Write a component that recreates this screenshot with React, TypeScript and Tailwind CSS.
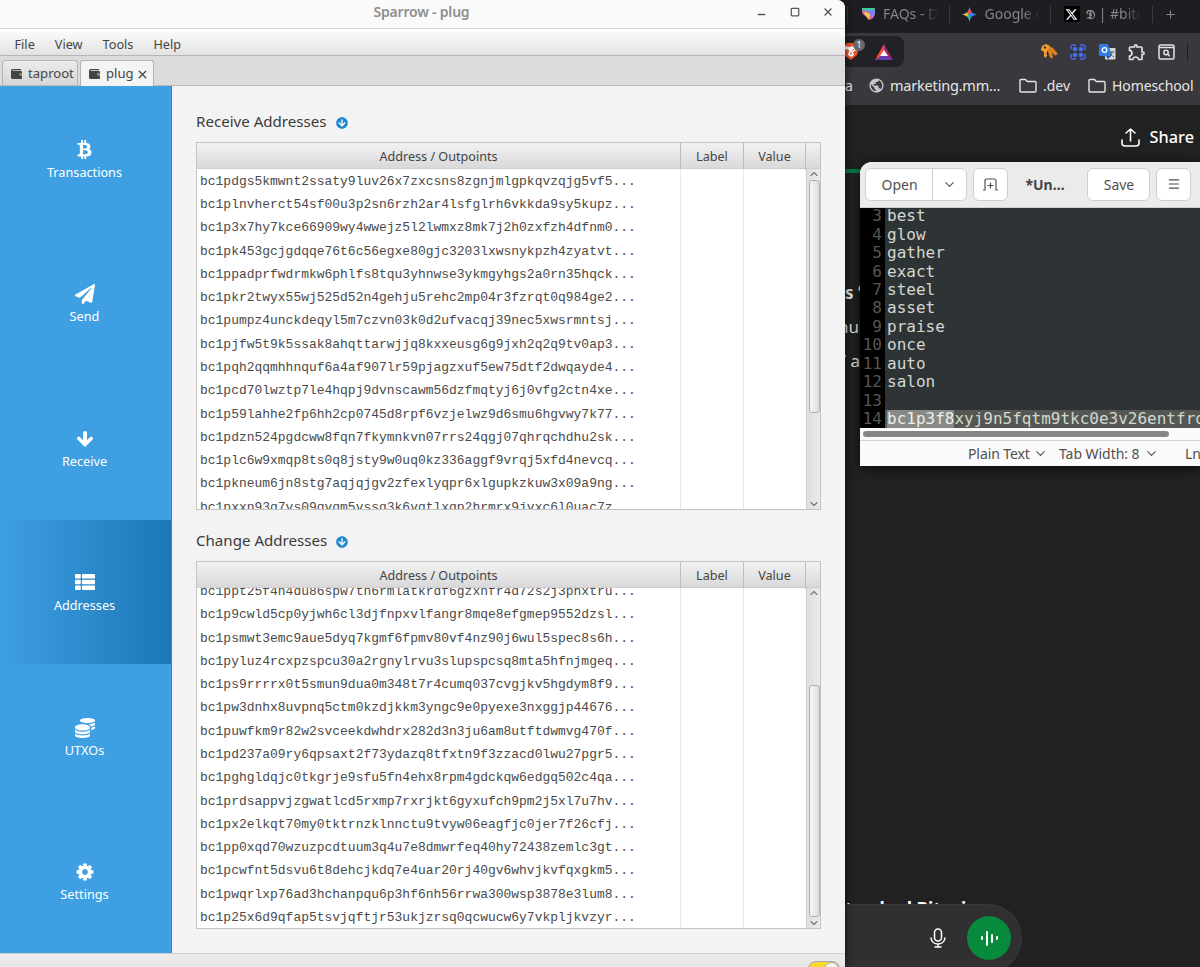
import { Fragment } from 'react';
import type { ReactNode } from 'react';
import { ChevronDown, ChevronUp, Menu, Minus, Plus, Square, X } from 'lucide-react';
import { FaArrowCircleDown, FaBtc, FaCoins, FaPaperPlane } from 'react-icons/fa';
import { FaXTwitter } from 'react-icons/fa6';
import { MdOutlineExtension, MdPublic } from 'react-icons/md';

const receiveAddresses = [
  'bc1pdgs5kmwnt2ssaty9luv26x7zxcsns8zgnjmlgpkqvzqjg5vf5...',
  'bc1plnvherct54sf00u3p2sn6rzh2ar4lsfglrh6vkkda9sy5kupz...',
  'bc1p3x7hy7kce66909wy4wwejz5l2lwmxz8mk7j2h0zxfzh4dfnm0...',
  'bc1pk453gcjgdqqe76t6c56egxe80gjc3203lxwsnykpzh4zyatvt...',
  'bc1ppadprfwdrmkw6phlfs8tqu3yhnwse3ykmgyhgs2a0rn35hqck...',
  'bc1pkr2twyx55wj525d52n4gehju5rehc2mp04r3fzrqt0q984ge2...',
  'bc1pumpz4unckdeqyl5m7czvn03k0d2ufvacqj39nec5xwsrmntsj...',
  'bc1pjfw5t9k5ssak8ahqttarwjjq8kxxeusg6g9jxh2q2q9tv0ap3...',
  'bc1pqh2qqmhhnquf6a4af907lr59pjagzxuf5ew75dtf2dwqayde4...',
  'bc1pcd70lwztp7le4hqpj9dvnscawm56dzfmqtyj6j0vfg2ctn4xe...',
  'bc1p59lahhe2fp6hh2cp0745d8rpf6vzjelwz9d6smu6hgvwy7k77...',
  'bc1pdzn524pgdcww8fqn7fkymnkvn07rrs24qgj07qhrqchdhu2sk...',
  'bc1plc6w9xmqp8ts0q8jsty9w0uq0kz336aggf9vrqj5xfd4nevcq...',
  'bc1pkneum6jn8stg7aqjqjgv2zfexlyqpr6xlgupkzkuw3x09a9ng...',
  'bc1pxxn93q7vs09qvqm5vssq3k6vqtlxqp2hrmrx9jvxc6l0uac7z...',
];

const changeAddresses = [
  'bc1ppt25f4n4du86spw7tn6rmlatkrdf6gzxnfr4d72s2j3phxtru...',
  'bc1p9cwld5cp0yjwh6cl3djfnpxvlfangr8mqe8efgmep9552dzsl...',
  'bc1psmwt3emc9aue5dyq7kgmf6fpmv80vf4nz90j6wul5spec8s6h...',
  'bc1pyluz4rcxpzspcu30a2rgnylrvu3slupspcsq8mta5hfnjmgeq...',
  'bc1ps9rrrrx0t5smun9dua0m348t7r4cumq037cvgjkv5hgdym8f9...',
  'bc1pw3dnhx8uvpnq5ctm0kzdjkkm3yngc9e0pyexe3nxggjp44676...',
  'bc1puwfkm9r82w2svceekdwhdrx282d3n3ju6am8utftdwmvg470f...',
  'bc1pd237a09ry6qpsaxt2f73ydazq8tfxtn9f3zzacd0lwu27pgr5...',
  'bc1pghgldqjc0tkgrje9sfu5fn4ehx8rpm4gdckqw6edgq502c4qa...',
  'bc1prdsappvjzgwatlcd5rxmp7rxrjkt6gyxufch9pm2j5xl7u7hv...',
  'bc1px2elkqt70my0tktrnzklnnctu9tvyw06eagfjc0jer7f26cfj...',
  'bc1pp0xqd70wzuzpcdtuum3q4u7e8dmwrfeq40hy72438zemlc3gt...',
  'bc1pcwfnt5dsvu6t8dehcjkdq7e4uar20rj40gv6whvjkvfqxgkm5...',
  'bc1pwqrlxp76ad3hchanpqu6p3hf6nh56rrwa300wsp3878e3lum8...',
  'bc1p25x6d9qfap5tsvjqftjr53ukjzrsq0qcwucw6y7vkpljkvzyr...',
];

function DownArrowIcon() {
  return (
    <svg width="18" height="18" viewBox="0 0 18 18" fill="none" stroke="currentColor" strokeWidth="4" strokeLinecap="round">
      <path d="M9 3v10" />
      <path d="M2.800 8.500L9 14.500l6.200-6" strokeWidth="3.600" />
    </svg>
  );
}

function ListIcon() {
  return (
    <svg width="20" height="16" viewBox="0 0 20 16" fill="currentColor" className="-mt-0.5">
      {[0, 5.7, 11.4].map((y) => (
        <Fragment key={y}>
          <rect x="0" y={y} width="5.800" height="4.600" rx="0.800" />
          <rect x="7" y={y} width="13" height="4.600" rx="0.800" />
        </Fragment>
      ))}
    </svg>
  );
}

function GearIcon() {
  return (
    <svg width="18" height="18" viewBox="-9 -9 18 18" fill="none" stroke="currentColor">
      <circle r="4.700" strokeWidth="3.600" />
      {[0, 45, 90, 135].map((angle) => (
        <path key={angle} d="M0-8.500v3M0 8.500v-3" strokeWidth="3.600" transform={`rotate(${angle})`} />
      ))}
    </svg>
  );
}

function WalletIcon() {
  return (
    <svg width="11" height="10" viewBox="0 0 11 10" className="mr-[6px] shrink-0" fill="currentColor">
      <path d="M0 1.500Q0 0 1.500 0H10v1.200H1.500v.8H10q1 0 1 1v1H8.500v2.500H11V9q0 1-1 1H1.500Q0 10 0 8.500z" />
      <path d="M8.500 4H11v2.500H8.500z" opacity="0.6" />
    </svg>
  );
}

function FolderIcon() {
  return (
    <svg width="18" height="15" viewBox="0 0 18 15" fill="none" stroke="currentColor" strokeWidth="1.400" className="shrink-0">
      <path d="M1 2.500q0-1 1-1h4.500l1.800 2H16q1 0 1 1V13q0 1-1 1H2q-1 0-1-1z" strokeLinejoin="round" />
    </svg>
  );
}

const navItems = [
  { label: 'Transactions', icon: <FaBtc size={19} /> },
  { label: 'Send', icon: <FaPaperPlane size={20} /> },
  { label: 'Receive', icon: <DownArrowIcon /> },
  { label: 'Addresses', icon: <ListIcon />, active: true },
  { label: 'UTXOs', icon: <FaCoins size={20} /> },
  { label: 'Settings', icon: <GearIcon /> },
];

const words = ['best', 'glow', 'gather', 'exact', 'steel', 'asset', 'praise', 'once', 'auto', 'salon', ''];

interface AddressTableProps {
  title: string;
  rows: string[];
  scrolled?: boolean;
}

function AddressTable({ title, rows, scrolled }: AddressTableProps) {
  return (
    <section>
      <div className="flex h-5 items-center gap-[9px]">
        <h2 className="-mt-0.5 text-[15.1px] text-[#3b3b3b]">{title}</h2>
        <FaArrowCircleDown size={12} className="mt-px text-[#1e88cf]" />
      </div>
      <div className="mt-[10px] flex h-[368px] w-[625px] flex-col overflow-hidden border border-[#c3c3c3] bg-white">
        <div className="grid h-[26px] shrink-0 grid-cols-[484px_63px_62px_1fr] border-b border-[#cfcfcf] bg-gradient-to-b from-[#f2f2f2] to-[#d9d9d9] text-center text-[12.6px] leading-[27px] text-[#444]">
          <div className="border-r border-[#bdbdbd]">Address / Outpoints</div>
          <div className="border-r border-[#bdbdbd]">Label</div>
          <div className="border-r border-[#bdbdbd]">Value</div>
          <div />
        </div>
        <div className="grid min-h-0 flex-1 grid-cols-[484px_63px_62px_1fr]">
          <div className="overflow-hidden border-r border-[#e9e9e9] pl-[3px] font-['Liberation_Mono',monospace] text-[12.98px] text-[#4a4a4a]">
            <div className={scrolled ? '-mt-[7.9px]' : 'mt-[0.9px]'}>
              {rows.map((address) => (
                <div key={address} className="h-[23.27px] leading-[23.27px]">
                  {address}
                </div>
              ))}
            </div>
          </div>
          <div className="border-r border-[#e9e9e9]" />
          <div />
          <div className="flex flex-col items-center border-l border-[#cfcfcf] bg-gradient-to-r from-[#dedede] to-[#ececec] text-[#777]">
            <ChevronUp size={14} strokeWidth={2.2} className="-mt-px h-3 shrink-0" />
            <div
              className={`w-[11px] rounded-[3px] border border-[#b0b0b0] bg-gradient-to-r from-[#f7f7f7] to-[#dcdcdc] ${
                scrolled ? 'mt-[86px] h-[232px]' : 'h-[233px]'
              }`}
            />
            <ChevronDown size={14} strokeWidth={2.2} className="-mb-px mt-auto h-3 shrink-0" />
          </div>
        </div>
      </div>
    </section>
  );
}

function WalletWindow() {
  return (
    <div className="z-10 flex h-[967px] flex-col overflow-hidden rounded-tr-lg bg-[#f3f3f3] shadow-[0_0_8px_rgba(0,0,0,0.7)]">
      <div className="grid h-[29px] shrink-0 grid-cols-[1fr_auto_1fr] items-center border-b border-[#d6d6d6] bg-[#fafafa]">
        <div />
        <h1 className="-mt-1.5 pr-[2px] text-[14px] font-semibold tracking-[-0.2px] text-[#8e8e8e]">Sparrow - plug</h1>
        <div className="-mt-[5px] flex items-center justify-end gap-[22.5px] pr-[11px] text-[#555]">
          <Minus size={11} strokeWidth={3} className="mt-1.5" />
          <Square size={10} strokeWidth={3} />
          <X size={12} strokeWidth={2.8} />
        </div>
      </div>

      <div className="flex h-[27px] shrink-0 items-center gap-5 border-b border-[#b5b5b5] bg-gradient-to-b from-[#fdfdfd] to-[#e2e2e2] pt-[5px] pl-[14.500px] text-[12.7px] text-[#444]">
        <span>File</span>
        <span>View</span>
        <span>Tools</span>
        <span>Help</span>
      </div>

      <div className="flex h-[30px] shrink-0 items-end gap-[2px] border-b border-[#b9b9b9] bg-[#dcdcdc] pl-[2px] text-[13.1px] text-[#444]">
        <div className="flex h-[25px] w-[76px] items-center rounded-t-[3px] border border-b-0 border-[#b4b4b4] bg-gradient-to-b from-[#ececec] to-[#d6d6d6] pl-2 pt-0.5">
          <WalletIcon />
          taproot
        </div>
        <div className="-mb-px flex h-[26px] w-[74px] items-center rounded-t-[3px] border border-b-0 border-[#b4b4b4] bg-[#f4f4f4] pl-2 pt-px">
          <WalletIcon />
          plug
          <X size={13} strokeWidth={2.3} className="ml-[2px] shrink-0" />
        </div>
      </div>

      <div className="flex h-[867px] shrink-0">
        <nav className="flex w-[172px] flex-col border-r border-[#3387c2] bg-[#3e9fe3] text-white">
          {navItems.map((item) => (
            <div
              key={item.label}
              className={`flex flex-1 flex-col items-center pr-[2px] pt-[52.500px] ${
                item.active ? 'bg-gradient-to-r from-[#3e9fe3] to-[#1c77b6]' : ''
              }`}
            >
              <div className="flex h-[22px] items-center">{item.icon}</div>
              <span className="mt-[1px] text-[12.7px] leading-5">{item.label}</span>
            </div>
          ))}
        </nav>
        <main className="flex flex-1 flex-col gap-[21px] pl-6 pt-[26px]">
          <AddressTable title="Receive Addresses" rows={receiveAddresses} />
          <AddressTable title="Change Addresses" rows={changeAddresses} scrolled />
        </main>
      </div>

      <div className="flex flex-1 justify-end border-t border-[#cfcfcf] bg-gradient-to-b from-[#ececec] to-[#e2e2e2] pr-[5px] pt-[7px]">
        <div className="flex h-4 w-8 justify-end rounded-full border border-[#a8a8a8] bg-[#fbd82f]">
          <div className="size-[15px] rounded-full border border-[#aaa] bg-[#f4f4f4]" />
        </div>
      </div>
    </div>
  );
}

function ShieldIcon() {
  return (
    <svg width="13" height="14" viewBox="0 0 13 14" className="-ml-0.5">
      <path d="M0 2q0-1 1-1h11q1 0 1 1v5q-1 5-6 6Q5 10 2 8 0 7 0 5z" fill="#e85bb4" />
      <path d="M0 2q0-1 1-1h11q1 0 1 1v2L5 3.500 0 4z" fill="#37c9a1" />
      <path d="M2 5q4 0 6 2l-1 6Q5 10 3 8z" fill="#f2cc45" />
      <path d="M5 4l8-1v4l-4 4Q9 7 5 4z" fill="#7885ef" />
    </svg>
  );
}

function SparkIcon() {
  return (
    <svg width="15" height="15" viewBox="0 0 16 16" className="-ml-0.5">
      <path d="M8 0c1 5 3 7 8 8-5 1-7 3-8 8-1-5-3-7-8-8 5-1 7-3 8-8z" fill="#3186f5" />
      <path d="M8 0c1 4 2 5.500 3 6L6 8 4.500 6.500C6.500 5.500 7.400 3 8 0z" fill="#ef5141" />
      <path d="M0 8c2.500-.5 4-1 5-2l2 2-2 2c-1-1-2.500-1.500-5-2z" fill="#f3c624" />
      <path d="M5 10l3-2 1 3c-.5 1.500-.8 3-1 5-.5-3-1.300-5-3-6z" fill="#33b768" />
    </svg>
  );
}

interface BrowserTabProps {
  icon: ReactNode;
  children: ReactNode;
}

function BrowserTab({ icon, children }: BrowserTabProps) {
  return (
    <div className="flex h-[17px] w-[101.500px] shrink-0 items-center overflow-hidden border-l border-[#3b3a40] pl-[13px]">
      <div className="flex w-4 shrink-0 justify-center">{icon}</div>
      <span className="ml-[6px] w-[55px] overflow-hidden bg-gradient-to-r from-[#88878c] from-70% to-transparent bg-clip-text text-[14px] leading-5 whitespace-nowrap text-transparent">
        {children}
      </span>
    </div>
  );
}

function BrowserWindow() {
  return (
    <div className="flex h-[967px] flex-col overflow-hidden bg-[#212121] text-[#e6e6e6]">
      <div className="flex h-[33px] shrink-0 items-center bg-[#1e1d22] pb-[5px] pl-[2px]">
        <BrowserTab icon={<ShieldIcon />}>FAQs - Doc</BrowserTab>
        <BrowserTab icon={<SparkIcon />}>Google Ge</BrowserTab>
        <BrowserTab
          icon={
            <span className="-ml-px flex size-4 items-center justify-center bg-black text-white">
              <FaXTwitter size={13} />
            </span>
          }
        >
          <b>𝕯</b> | #bitcoin
        </BrowserTab>
        <div className="flex h-[17px] items-center border-l border-[#3b3a40] pl-[11px]">
          <Plus size={13} className="text-[#88878c]" />
        </div>
      </div>

      <div className="flex h-[37px] shrink-0 items-center bg-[#39383d]">
        <div className="flex h-[31px] w-[59px] items-center rounded-r-lg bg-[#222126]">
          <div className="relative h-[17px] w-[14px]">
            <svg width="14" height="17" viewBox="0 0 14 17">
              <path d="M-2 2L3-.2h6L13 2l1 3-2 7-6 5-6-4z" fill="#f0532b" />
              <path d="M0 3l4 1 5-1 2 4-3 2 1 3-3 2-3-2 1-4-4-2z" fill="#fff" />
              <path d="M2 6l2 2M9 6L7 8M6 9v3" stroke="#f0532b" strokeWidth="1" />
            </svg>
            <span className="absolute -top-1 left-2 size-3 rounded-full bg-[#68676d] text-center text-[9px] leading-3 text-white">
              1
            </span>
          </div>
          <svg width="18" height="16" viewBox="0 0 18 16" className="ml-4">
            <path d="M9 0L0 16l9-5z" fill="#ff4b2f" />
            <path d="M9 0l9 16-9-5z" fill="#9e2b68" />
            <path d="M0 16h18l-9-6z" fill="#663ab0" />
            <path d="M9 6l-4 6h8z" fill="#fff" />
          </svg>
        </div>
        <div className="ml-auto flex items-center gap-[12.5px] pr-[12px]">
          <svg width="17" height="16" viewBox="0 0 17 16">
            <path d="M1 2l4-2 4 2-1 4-2 1v2H5v1h1v2l-2 2-1-2V8L0 6z" fill="#f5a02a" />
            <path d="M8 2l4 2 5 6-3 1.500-3-3 1 6-3-1-2-6z" fill="#dd8120" />
            <circle cx="4" cy="3.500" r="1.200" fill="#39383d" />
          </svg>
          <svg width="16" height="16" viewBox="0 0 16 16" fill="#4c80ff" stroke="#4568e3" strokeWidth="1.500">
            <path d="M1 5V3q0-2 2-2h3M10 1h3q2 0 2 2v3M15 10v3q0 2-2 2h-3M6 15H3q-2 0-2-2v-3" fill="none" />
            <rect x="3.500" y="3.500" width="3" height="3" rx="1" />
            <rect x="9.500" y="3.500" width="3" height="3" rx="1" />
            <rect x="3.500" y="9.500" width="3" height="3" rx="1" />
            <rect x="9.500" y="9.500" width="3" height="3" rx="1" />
          </svg>
          <svg width="17" height="16" viewBox="0 0 17 16">
            <rect x="6" y="4" width="10.500" height="11.500" rx="1" fill="#d5d8dc" />
            <path d="M1 0h8l4 12H1q-1 0-1-1V1q0-1 1-1z" fill="#2f7de1" />
            <circle cx="5.500" cy="6" r="2.300" fill="none" stroke="#fff" strokeWidth="1.300" />
            <path d="M10.500 8h5M13 7c0 3-1 5-3 6M11 9c1 2 2 3 4 4" fill="none" stroke="#5f6b79" />
            <path d="M7 12h5l-3 3z" fill="#1957b4" />
          </svg>
          <MdOutlineExtension size={20} className="-mx-[1.5px] text-[#e3e3e6]" />
          <svg width="17" height="16" viewBox="0 0 17 16" fill="none" stroke="#e3e3e6" strokeWidth="1.500">
            <rect x="1" y="1" width="15" height="14" rx="1.500" />
            <path d="M1 3.500h15" />
            <circle cx="8" cy="8.500" r="2.200" />
            <path d="M9.700 10.200l2 2" />
          </svg>
          <div className="h-4 w-px bg-[#1c1b20]" />
        </div>
      </div>

      <div className="flex h-[35px] shrink-0 items-center bg-[#39383d] pb-1 text-[14px] whitespace-nowrap">
        <span className="w-[8px] overflow-hidden">a</span>
        <MdPublic size={17} className="ml-[15px] shrink-0 text-[#c5c5c8]" />
        <span className="ml-[5px] w-[129px] shrink-0 text-[14.5px] tracking-[-0.2px]">marketing.mm…</span>
        <FolderIcon />
        <span className="ml-[6px] w-[45px] shrink-0">.dev</span>
        <FolderIcon />
        <span className="ml-[6px] tracking-[-0.1px]">Homeschool</span>
      </div>

      <div className="flex h-16 shrink-0 items-center justify-end gap-[10px] pr-[6px] text-white">
        <svg width="19" height="19" viewBox="0 0 19 19" fill="none" stroke="currentColor" strokeWidth="1.600" strokeLinecap="round" strokeLinejoin="round">
          <path d="M9.500 13V1M5 5l4.500-4L14 5M1 12v3q0 3 3 3h11q3 0 3-3v-3" />
        </svg>
        <span className="text-[16.3px] font-medium">Share</span>
      </div>
      <div className="h-1 w-10 shrink-0 bg-[#087943]" />
      <div className="mt-[103px] shrink-0 text-[17px] leading-[34px] whitespace-nowrap">
        <p className="font-bold">s ’</p>
        <p className="-ml-[7px]">nu</p>
        <p className="-ml-[2px]">’ a</p>
      </div>
      <div className="mt-[520px] h-[6px] shrink-0 overflow-hidden text-[17.5px] font-bold text-white">
        <p className="leading-5 whitespace-nowrap">tracked Bitcoin</p>
      </div>
      <div className="flex h-[68px] w-[177px] shrink-0 items-center justify-end gap-[21px] rounded-r-full border border-l-0 border-[#383838] bg-[#303030] pr-[10px]">
        <svg width="16" height="20" viewBox="0 0 16 20" fill="none" stroke="white" strokeWidth="1.500" strokeLinecap="round">
          <rect x="4.500" y="1" width="7" height="12" rx="3.500" />
          <path d="M1 10c1 8 13 8 14 0M8 16v3M5 19h6" />
        </svg>
        <div className="flex size-11 items-center justify-center gap-[3px] rounded-full bg-[#078a3d]">
          <div className="h-1 w-[2px] rounded-full bg-white" />
          <div className="h-[15px] w-[2px] rounded-full bg-white" />
          <div className="h-[9px] w-[2px] rounded-full bg-white" />
          <div className="h-1 w-[2px] rounded-full bg-white" />
        </div>
      </div>
    </div>
  );
}

function EditorWindow() {
  return (
    <div className="absolute left-[860px] top-[162px] z-20 flex h-[304px] w-[340px] flex-col overflow-hidden rounded-tl-xl bg-[#fafafa] shadow-[0_2px_12px_rgba(0,0,0,0.7)]">
      <div className="flex h-[46px] shrink-0 items-center border-b border-[#cfcfcf] bg-[#ebebeb] pb-[1px] pl-[5px] text-[14px] text-[#505050]">
        <div className="flex h-[33px] w-[102px] shrink-0 items-center rounded-md border border-[#cecece] bg-white">
          <span className="flex h-full w-[67px] items-center justify-center border-r border-[#cecece] pl-px">Open</span>
          <ChevronDown size={15} strokeWidth={1.7} className="ml-[9px]" />
        </div>
        <div className="ml-[6px] flex h-[33px] w-[35px] shrink-0 items-center justify-center rounded-md border border-[#cecece] bg-white">
          <svg width="15" height="13" viewBox="0 0 15 13" fill="none" stroke="currentColor" strokeWidth="1.200">
            <path d="M0 12h2V3q0-2 2-2h7q2 0 2 2v9h2M7.500 4.500v6M4.500 7.500h6" />
          </svg>
        </div>
        <span className="w-[79px] shrink-0 pr-[5px] text-center text-[14px] font-bold text-[#444]">*Un…</span>
        <div className="flex h-[33px] w-[63px] shrink-0 items-center justify-center rounded-md border border-[#cecece] bg-white pl-px">
          Save
        </div>
        <div className="ml-[6px] flex h-[33px] w-[35px] shrink-0 items-center justify-center rounded-md border border-[#cecece] bg-white">
          <Menu size={14} strokeWidth={2} />
        </div>
      </div>

      <div className="h-[220px] shrink-0 overflow-hidden bg-[#2e3436] font-['DejaVu_Sans_Mono',monospace] text-[16px] text-[#d3d7cf]">
        <div className="-mt-[0.8px] grid grid-cols-[25px_1fr] leading-[18.45px] whitespace-nowrap">
          {words.map((word, index) => (
            <Fragment key={index}>
              <span className="h-[18.45px] bg-black pr-[3px] text-right text-[#555753]">{index + 3}</span>
              <span className="pl-[2px]">{word}</span>
            </Fragment>
          ))}
          <span className="h-5 bg-black pr-[3px] text-right text-[#555753]">14</span>
          <span className="overflow-hidden bg-[#555753] pl-[2px]">
            <span className="bg-[#888a85] text-[#eeeeec]">bc1p3f8</span>
            xyj9n5fqtm9tkc0e3v26entfrq
          </span>
        </div>
      </div>

      <div className="flex h-[13px] shrink-0 items-center border-b border-[#d5d5d5] pl-[3px]">
        <div className="h-[6px] w-[306px] rounded-full bg-[#868686]" />
      </div>
      <div className="flex flex-1 items-center pl-[108px] text-[14px] whitespace-nowrap text-[#505050]">
        <span className="w-[62px] shrink-0 tracking-[-0.1px]">Plain Text</span>
        <ChevronDown size={15} strokeWidth={1.7} className="ml-[3px] shrink-0" />
        <span className="ml-[11px] w-[81px] shrink-0 tracking-[-0.05px]">Tab Width: 8</span>
        <ChevronDown size={15} strokeWidth={1.7} className="ml-[4px] shrink-0" />
        <span className="ml-[26px] shrink-0">Ln 14</span>
      </div>
    </div>
  );
}

export default function App() {
  return (
    <div className="relative grid h-[967px] w-[1200px] grid-cols-[845px_355px] overflow-hidden bg-[#212121] font-['Noto_Sans',sans-serif]">
      <WalletWindow />
      <BrowserWindow />
      <EditorWindow />
    </div>
  );
}
